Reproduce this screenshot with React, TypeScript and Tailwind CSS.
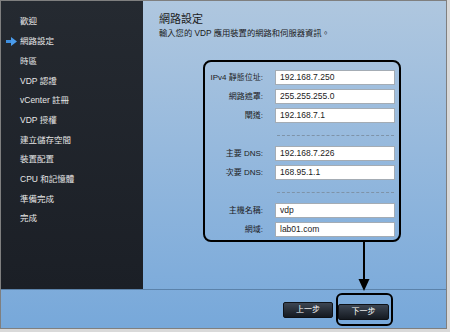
import React from 'react';

const steps = [
  '歡迎',
  '網路設定',
  '時區',
  'VDP 認證',
  'vCenter 註冊',
  'VDP 授權',
  '建立儲存空間',
  '裝置配置',
  'CPU 和記憶體',
  '準備完成',
  '完成',
];

const groups = [
  [
    ['IPv4 靜態位址:', '192.168.7.250'],
    ['網路遮罩:', '255.255.255.0'],
    ['閘道:', '192.168.7.1'],
  ],
  [
    ['主要 DNS:', '192.168.7.226'],
    ['次要 DNS:', '168.95.1.1'],
  ],
  [
    ['主機名稱:', 'vdp'],
    ['網域:', 'lab01.com'],
  ],
];

const font = { fontFamily: '"Liberation Sans", "Noto Sans CJK TC", sans-serif' };

function StepArrow() {
  return (
    <svg width="11" height="9" viewBox="0 0 11 9" className="shrink-0">
      <rect x="0" y="3" width="6" height="3" fill="#3f8fe0" />
      <polygon points="5,0 11,4.5 5,9" fill="#4a9cec" />
    </svg>
  );
}

function Row({ label, value }: { label: string; value: string }) {
  return (
    <div className="flex items-center h-[15px]">
      <div className="w-[58px] text-right text-[8px] text-[#1c1c1c] whitespace-nowrap">{label}</div>
      <div className="ml-[12px] w-[120px] h-[15px] bg-white border border-[#a4acb4] pl-[4px] text-[8.5px] leading-[13px] text-[#222]">
        {value}
      </div>
    </div>
  );
}

export default function App() {
  return (
    <div className="w-[450px] h-[332px] bg-[#d9d9d9]" style={font}>
      <div className="relative w-[447px] h-[329px] border border-[#7f7f7f] bg-gradient-to-b from-[#afc7df] to-[#77a8da] flex flex-col">
        {/* top: sidebar + content */}
        <div className="flex h-[288px]">
          <div className="w-[142px] h-full bg-gradient-to-b from-[#252a31] to-[#1b1f26] pt-[11px]">
            {steps.map((s, i) => (
              <div key={s} className="flex items-center h-[19.7px] pl-[5px]">
                <div className="w-[14px]">{i === 1 && <StepArrow />}</div>
                <span className="text-[8.5px] text-[#e6e6e6] whitespace-nowrap">{s}</span>
              </div>
            ))}
          </div>

          <div className="flex-1 pl-[16px] pt-[11px]">
            <div className="text-[11px] leading-[14px] text-[#1a1a1a]">網路設定</div>
            <div className="mt-[2px] text-[8.3px] leading-[10px] text-[#1a1a1a] whitespace-nowrap">
              輸入您的 VDP 應用裝置的網路和伺服器資訊。
            </div>

            <div className="mt-[22px] ml-[44px] w-[198px] h-[182px] border-2 border-black rounded-[8px] pt-[8px]">
              {groups.map((g, gi) => (
                <div key={gi}>
                  {gi > 0 && (
                    <div className="ml-[72px] w-[117px] mt-[12px] mb-[10px] border-t border-dashed border-[#7e93a8]" />
                  )}
                  <div className="flex flex-col gap-[4px]">
                    {g.map(([l, v]) => (
                      <Row key={l} label={l} value={v} />
                    ))}
                  </div>
                </div>
              ))}
            </div>
          </div>
        </div>

        <div className="border-t border-[#5b82aa]" />

        {/* footer buttons */}
        <div className="flex justify-end items-center gap-[3px] pt-[3px] pr-[53px]">
          <button className="w-[50px] h-[16px] rounded-[2px] border border-[#0e1218] bg-gradient-to-b from-[#3d4653] to-[#151a21] text-white text-[8px]">
            上一步
          </button>
          <div className="border-2 border-black rounded-[6px] pt-[2px] pb-[3px] pr-[2px]">
            <button className="w-[51px] h-[16px] rounded-[2px] border border-[#0e1218] bg-gradient-to-b from-[#3d4653] to-[#151a21] text-white text-[8px]">
              下一步
            </button>
          </div>
        </div>

        {/* callout arrow */}
        <svg width="12" height="50" viewBox="0 0 12 50" className="absolute left-[357px] top-[241px]">
          <rect x="5" y="0" width="2" height="40" fill="#000" />
          <polygon points="0.5,37 11.5,37 6,49" fill="#000" />
        </svg>
      </div>
    </div>
  );
}
